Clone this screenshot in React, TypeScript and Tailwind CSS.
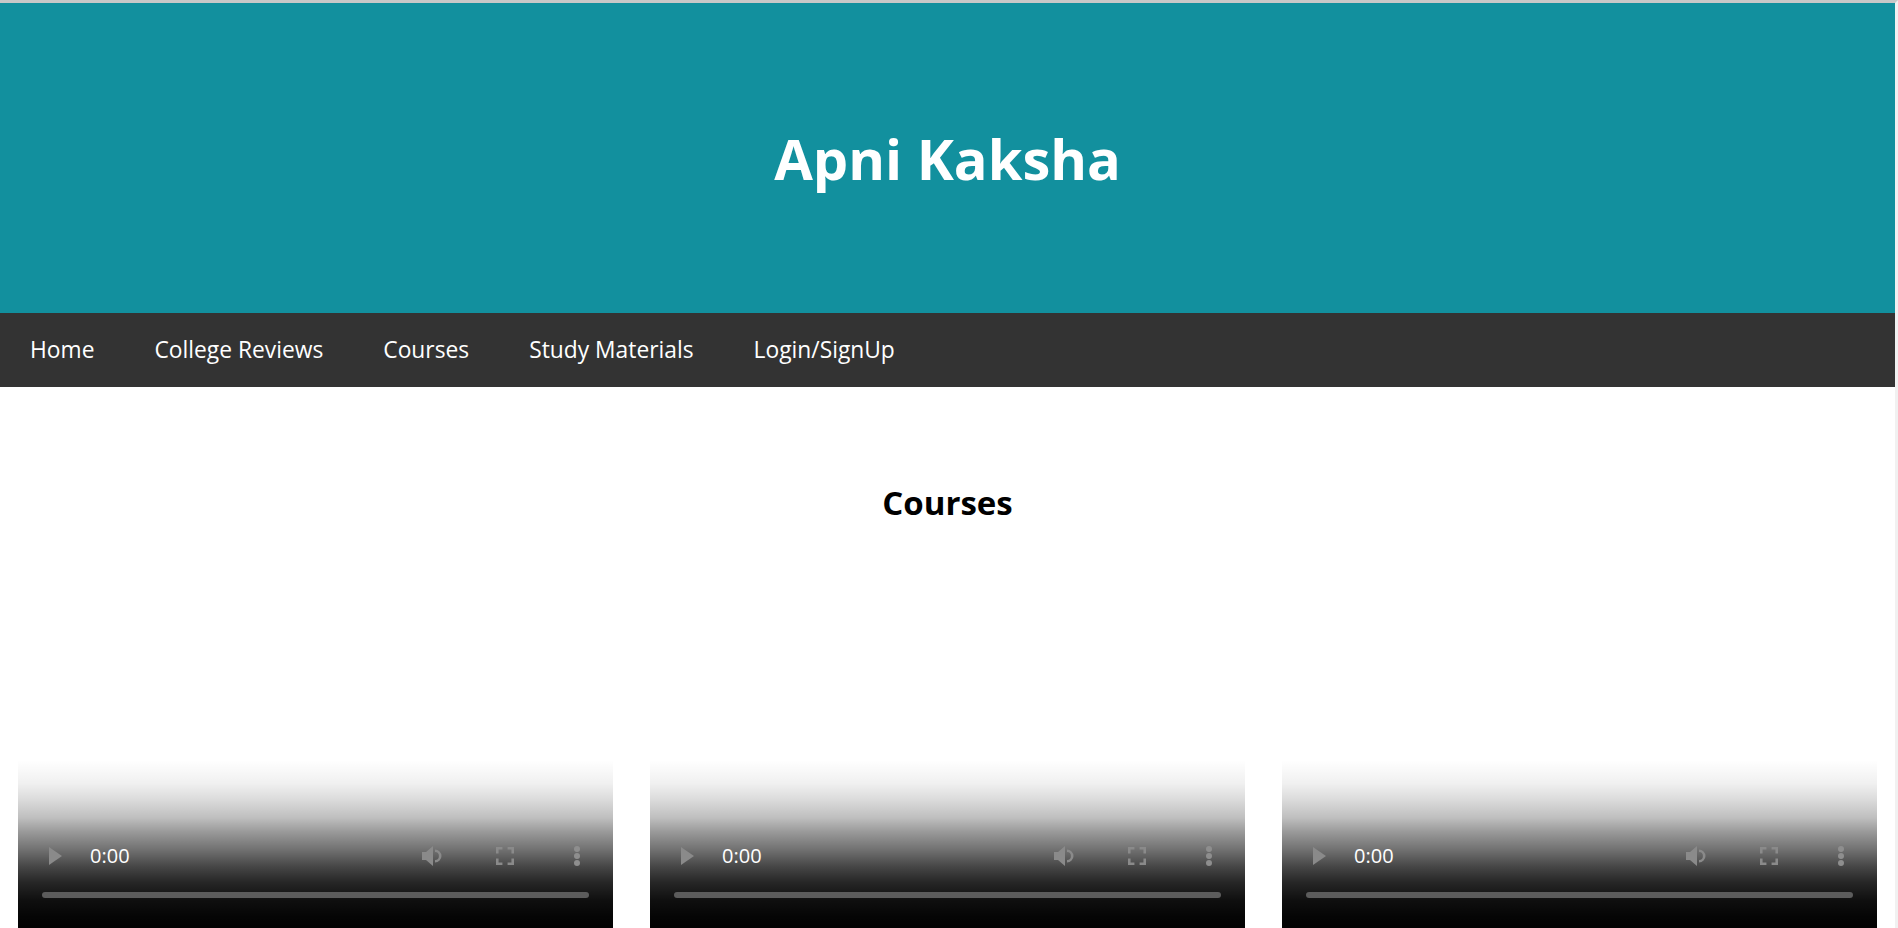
const links = ["Home", "College Reviews", "Courses", "Study Materials", "Login/SignUp"];

function VideoPlaceholder() {
  return (
    <div className="flex h-[297px] flex-col justify-end">
      <div className="flex h-[180px] flex-col bg-[linear-gradient(to_bottom,rgba(0,0,0,0)_0%,rgba(0,0,0,0.06)_13%,rgba(0,0,0,0.14)_22%,rgba(0,0,0,0.25)_32%,rgba(0,0,0,0.4)_40%,rgba(0,0,0,0.56)_50%,rgba(0,0,0,0.72)_59%,rgba(0,0,0,0.85)_68%,rgba(0,0,0,0.94)_78%,rgba(0,0,0,0.98)_87%,rgba(0,0,0,1)_100%)] pt-[85px]">
        <div className="flex h-[22px] items-center pl-[31px] pr-[33px]">
          <svg width="13" height="18" viewBox="0 0 13 18">
            <path d="M0 0L13 9L0 18Z" fill="#8a8a8a" />
          </svg>
          <span className="ml-[28px] text-[20px] leading-none text-white">0:00</span>
          {/* speaker with a single wave */}
          <svg className="ml-auto" width="22" height="22" viewBox="0 0 22 22">
            <path d="M0 7h4l7-6v20l-7-6H0z" fill="#8a8a8a" />
            <path d="M13 4.5a6.5 6.5 0 0 1 0 13v-2.6a3.9 3.9 0 0 0 0-7.8z" fill="#8a8a8a" />
          </svg>
          <svg className="ml-[52px]" width="18" height="18" viewBox="5 5 14 14">
            <path
              d="M7 14H5v5h5v-2H7v-3zm-2-4h2V7h3V5H5v5zm12 7h-3v2h5v-5h-2v3zM14 5v2h3v3h2V5h-5z"
              fill="#8a8a8a"
            />
          </svg>
          <svg className="ml-[60px]" width="6" height="20" viewBox="0 0 6 20">
            <circle cx="3" cy="3" r="3" fill="#8e8e8e" />
            <circle cx="3" cy="10" r="3" fill="#8e8e8e" />
            <circle cx="3" cy="17" r="3" fill="#8e8e8e" />
          </svg>
        </div>
        <div className="mx-[24px] mt-[25px] h-[6px] rounded-full bg-[#5c5c5c]" />
      </div>
    </div>
  );
}

export default function App() {
  return (
    <div
      className="min-h-screen border-t-[3px] border-r-[3px] border-t-[#c8c8c8] border-r-[#f1f1f1] bg-white"
      style={{ fontFamily: '"Open Sans", "Noto Sans", sans-serif' }}
    >
      <header className="flex h-[310px] items-center justify-center bg-[#12909e]">
        <h1 className="text-[56px] font-bold text-white">Apni Kaksha</h1>
      </header>

      <nav className="flex h-[74px] items-center bg-[#333333]">
        {links.map((link) => (
          <a key={link} href="#" className="px-[30px] text-[22.8px] text-white">
            {link}
          </a>
        ))}
      </nav>

      <main>
        <h2 className="mt-[91px] text-center text-[33px] font-bold text-black">Courses</h2>
        <div className="mt-[115px] grid grid-cols-3 gap-[37px] px-[18px]">
          <VideoPlaceholder />
          <VideoPlaceholder />
          <VideoPlaceholder />
        </div>
      </main>
    </div>
  );
}
